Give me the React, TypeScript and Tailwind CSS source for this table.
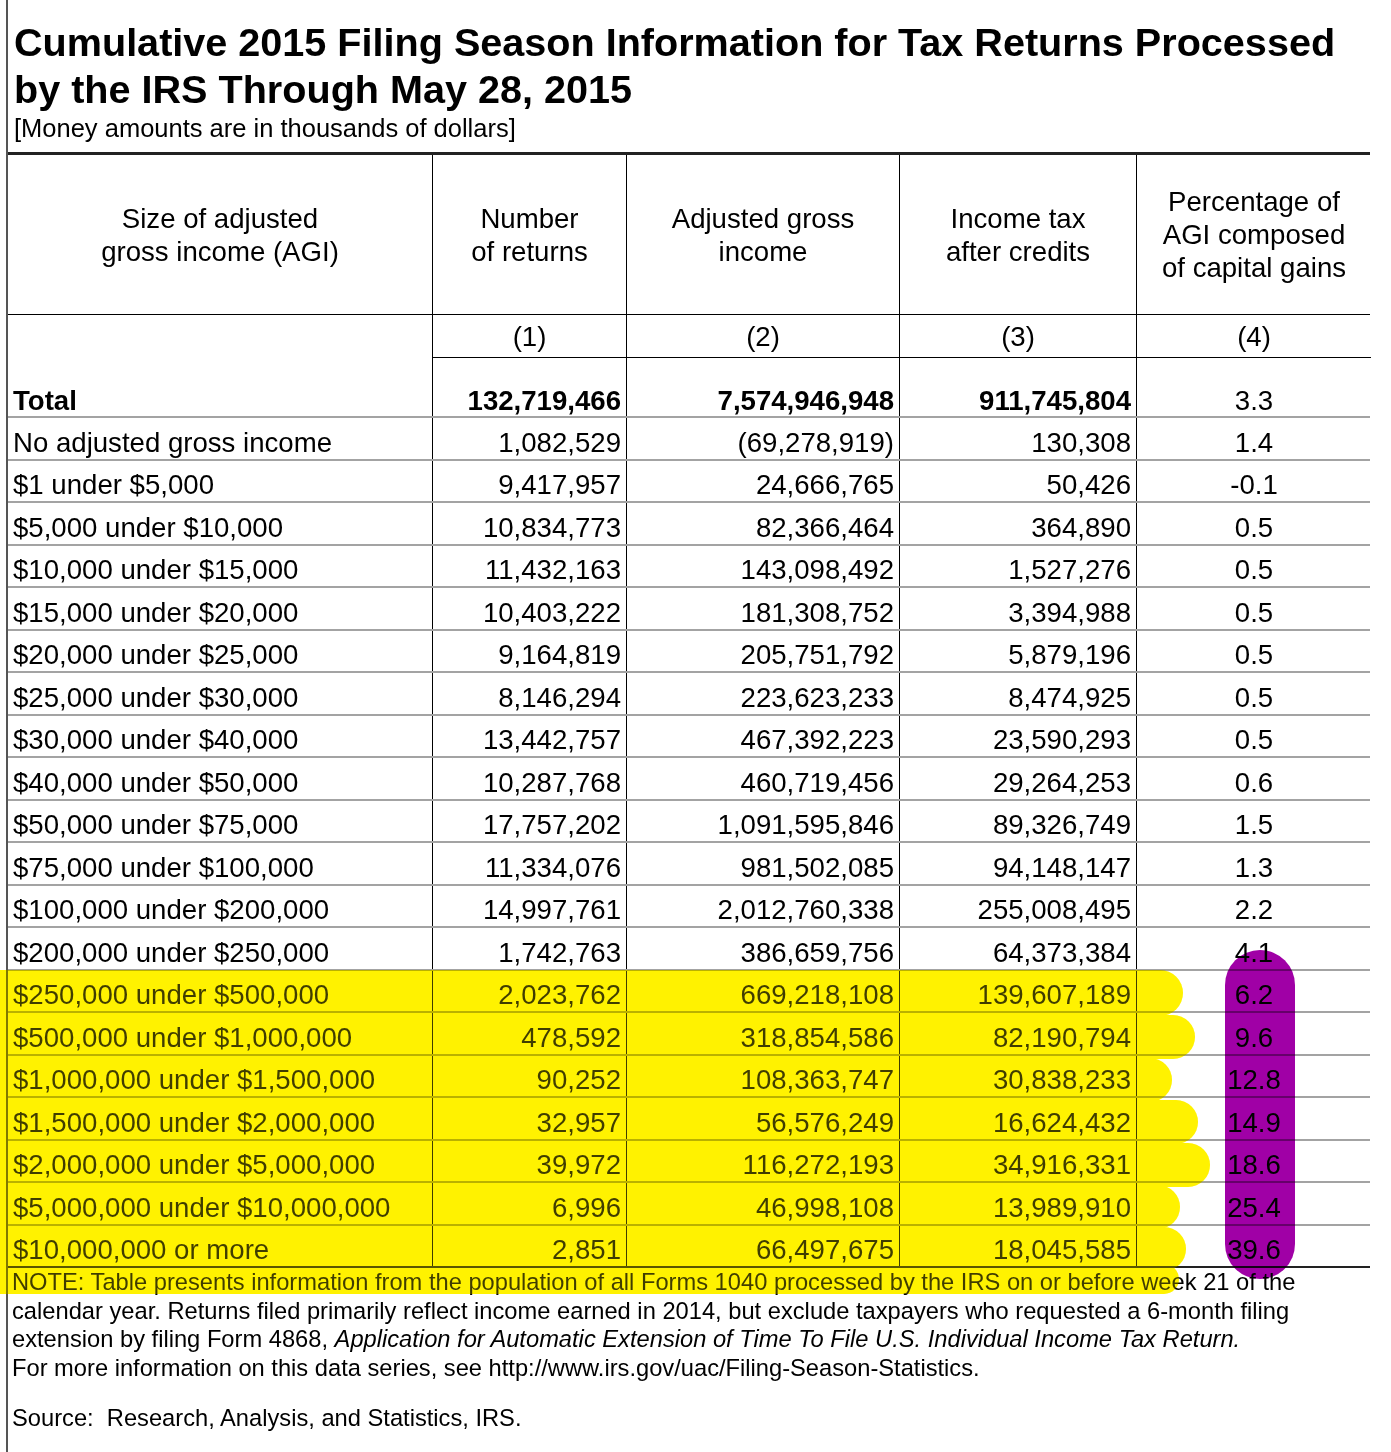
import React from "react";

type Row = [string, string, string, string, string];

const rows: Row[] = [
  ["No adjusted gross income", "1,082,529", "(69,278,919)", "130,308", "1.4"],
  ["$1 under $5,000", "9,417,957", "24,666,765", "50,426", "-0.1"],
  ["$5,000 under $10,000", "10,834,773", "82,366,464", "364,890", "0.5"],
  ["$10,000 under $15,000", "11,432,163", "143,098,492", "1,527,276", "0.5"],
  ["$15,000 under $20,000", "10,403,222", "181,308,752", "3,394,988", "0.5"],
  ["$20,000 under $25,000", "9,164,819", "205,751,792", "5,879,196", "0.5"],
  ["$25,000 under $30,000", "8,146,294", "223,623,233", "8,474,925", "0.5"],
  ["$30,000 under $40,000", "13,442,757", "467,392,223", "23,590,293", "0.5"],
  ["$40,000 under $50,000", "10,287,768", "460,719,456", "29,264,253", "0.6"],
  ["$50,000 under $75,000", "17,757,202", "1,091,595,846", "89,326,749", "1.5"],
  ["$75,000 under $100,000", "11,334,076", "981,502,085", "94,148,147", "1.3"],
  ["$100,000 under $200,000", "14,997,761", "2,012,760,338", "255,008,495", "2.2"],
  ["$200,000 under $250,000", "1,742,763", "386,659,756", "64,373,384", "4.1"],
  ["$250,000 under $500,000", "2,023,762", "669,218,108", "139,607,189", "6.2"],
  ["$500,000 under $1,000,000", "478,592", "318,854,586", "82,190,794", "9.6"],
  ["$1,000,000 under $1,500,000", "90,252", "108,363,747", "30,838,233", "12.8"],
  ["$1,500,000 under $2,000,000", "32,957", "56,576,249", "16,624,432", "14.9"],
  ["$2,000,000 under $5,000,000", "39,972", "116,272,193", "34,916,331", "18.6"],
  ["$5,000,000 under $10,000,000", "6,996", "46,998,108", "13,989,910", "25.4"],
  ["$10,000,000 or more", "2,851", "66,497,675", "18,045,585", "39.6"],
];

const grid = "grid grid-cols-[424px_194px_273px_237px_235px]";

// highlighter strokes: [y, xEnd, width]
const yellowStrokes: [number, number, number][] = [
  [993, 1160, 46],
  [1037, 1173, 44],
  [1080, 1150, 44],
  [1122, 1176, 44],
  [1165, 1188, 44],
  [1207, 1158, 44],
  [1249, 1164, 44],
  [1279, 1164, 30],
];

function Highlights({ mode }: { mode: "multiply" | "normal" }) {
  return (
    <svg
      className={
        mode === "multiply"
          ? "absolute left-0 top-0 pointer-events-none mix-blend-multiply"
          : "absolute left-0 top-0 pointer-events-none opacity-25"
      }
      width={1391}
      height={1452}
      viewBox="0 0 1391 1452"
    >
      <g stroke="#fff200" strokeLinecap="round" fill="none">
        {yellowStrokes.map(([y, x2, w]) => (
          <line key={y} x1={-30} y1={y} x2={x2} y2={y} strokeWidth={w} />
        ))}
      </g>
      {mode === "multiply" && (
        <line x1={1260} y1={985} x2={1260} y2={1244} stroke="#a000a6" strokeWidth={70} strokeLinecap="round" />
      )}
    </svg>
  );
}

export default function App() {
  return (
    <div className="relative w-[1391px] h-[1452px] overflow-hidden bg-white text-black font-['Liberation_Sans',Arial,sans-serif]">
      <div className="ml-[6px] w-[1364px] h-full border-l-2 border-[#555]">
        {/* Title */}
        <div className="pl-[6px] pt-[19px]">
          <h1 className="text-[39.6px] leading-[47px] font-bold whitespace-nowrap">
            Cumulative 2015 Filing Season Information for Tax Returns Processed
            <br />
            by the IRS Through May 28, 2015
          </h1>
          <p className="mt-[1px] text-[25.5px] leading-[28px] whitespace-nowrap">[Money amounts are in thousands of dollars]</p>
        </div>

        {/* Table */}
        <div className="mt-[10px] border-t-[3px] border-[#222]">
          <div className={`${grid} h-[160px] border-b border-black text-[27.6px] leading-[33px]`}>
            <div className="flex items-center justify-center text-center">
              <span>Size of adjusted<br />gross income (AGI)</span>
            </div>
            <div className="flex items-center justify-center text-center border-l border-black">
              <span>Number<br />of returns</span>
            </div>
            <div className="flex items-center justify-center text-center border-l border-black">
              <span>Adjusted gross<br />income</span>
            </div>
            <div className="flex items-center justify-center text-center border-l border-black">
              <span>Income tax<br />after credits</span>
            </div>
            <div className="flex items-center justify-center text-center border-l border-black">
              <span>Percentage of<br />AGI composed<br />of capital gains</span>
            </div>
          </div>

          <div className={`${grid} h-[43px] text-[27.6px] leading-none`}>
            <div />
            {["(1)", "(2)", "(3)", "(4)"].map((n) => (
              <div key={n} className="flex items-center justify-center border-l border-b border-black pt-[2px]">
                {n}
              </div>
            ))}
          </div>

          <div className={`${grid} h-[60px] border-b-2 border-[#a3a3a3] text-[27.6px] leading-none font-bold`}>
            <div className="flex items-end pl-[5px] pb-[1px]">Total</div>
            <div className="flex items-end justify-end pr-[5px] pb-[1px] border-l border-black">132,719,466</div>
            <div className="flex items-end justify-end pr-[5px] pb-[1px] border-l border-black">7,574,946,948</div>
            <div className="flex items-end justify-end pr-[5px] pb-[1px] border-l border-black">911,745,804</div>
            <div className="flex items-end justify-center pb-[1px] border-l border-black font-normal">3.3</div>
          </div>

          {rows.map((r, i) => (
            <div
              key={r[0]}
              className={`${grid} h-[42.5px] text-[27.6px] leading-none ${
                i === rows.length - 1 ? "border-b-2 border-[#222]" : "border-b-2 border-[#a3a3a3]"
              }`}
            >
              <div className="flex items-end pl-[5px] pb-[2px] whitespace-nowrap">{r[0]}</div>
              <div className="flex items-end justify-end pr-[5px] pb-[2px] border-l border-black">{r[1]}</div>
              <div className="flex items-end justify-end pr-[5px] pb-[2px] border-l border-black">{r[2]}</div>
              <div className="flex items-end justify-end pr-[5px] pb-[2px] border-l border-black">{r[3]}</div>
              <div className="flex items-end justify-center pb-[2px] border-l border-black">{r[4]}</div>
            </div>
          ))}
        </div>

        {/* Notes */}
        <div className="pl-[4px] text-[23.7px] leading-[28.5px] whitespace-nowrap">
          <p>
            NOTE: Table presents information from the population of all Forms 1040 processed by the IRS on or before week 21 of the
            <br />
            calendar year. Returns filed primarily reflect income earned in 2014, but exclude taxpayers who requested a 6-month filing
            <br />
            extension by filing Form 4868, <i>Application for Automatic Extension of Time To File U.S. Individual Income Tax Return.</i>
            <br />
            For more information on this data series, see http://www.irs.gov/uac/Filing-Season-Statistics.
          </p>
          <p className="mt-[22px]">Source:&nbsp; Research, Analysis, and Statistics, IRS.</p>
        </div>
      </div>

      <Highlights mode="multiply" />
      <Highlights mode="normal" />
    </div>
  );
}
